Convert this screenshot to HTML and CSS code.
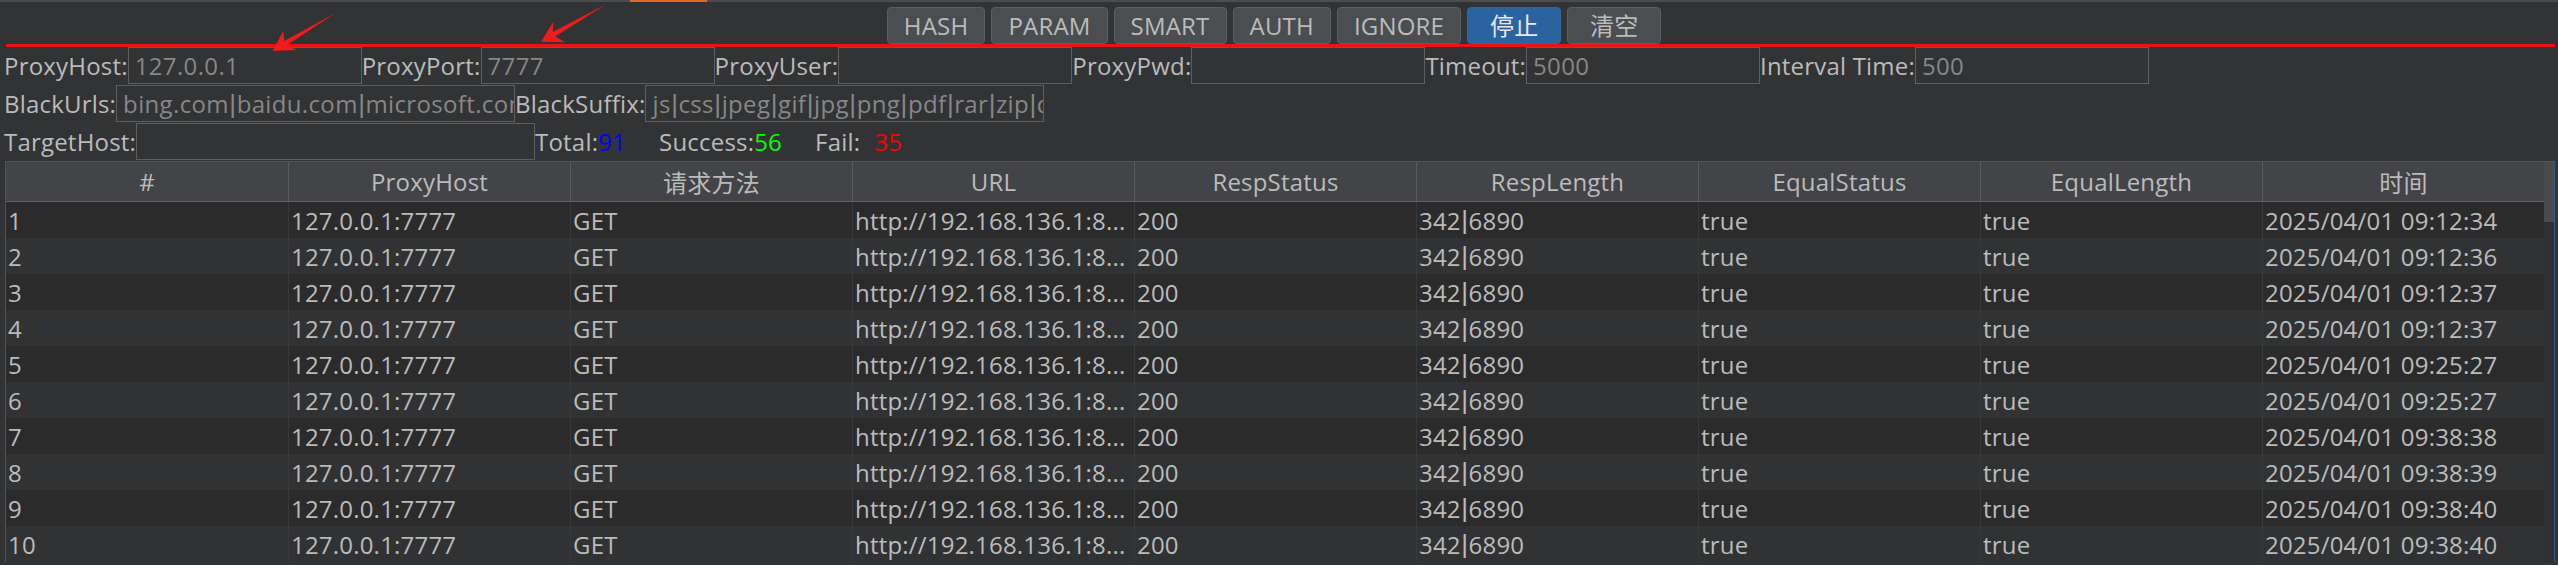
FILE: index.html
```html
<!DOCTYPE html>
<html lang="zh">
<head>
<meta charset="utf-8">
<title>Proxy Tester</title>
<link rel="stylesheet" href="styles.css">
</head>
<body>
<div class="app">
  <div class="tabline"><div class="accent"></div></div>
  <div class="toolbar">
    <div class="btn">HASH</div>
    <div class="btn">PARAM</div>
    <div class="btn">SMART</div>
    <div class="btn">AUTH</div>
    <div class="btn">IGNORE</div>
    <div class="btn btn-primary">停止</div>
    <div class="btn">清空</div>
  </div>
  <div class="redline"></div>

  <div class="form">
    <div class="frow">
      <span class="lbl">ProxyHost:</span><div class="field field-short">127.0.0.1</div>
      <span class="lbl">ProxyPort:</span><div class="field field-short">7777</div>
      <span class="lbl">ProxyUser:</span><div class="field field-short"></div>
      <span class="lbl">ProxyPwd:</span><div class="field field-short"></div>
      <span class="lbl">Timeout:</span><div class="field field-short">5000</div>
      <span class="lbl">Interval Time:</span><div class="field field-short">500</div>
    </div>
    <div class="frow">
      <span class="lbl">BlackUrls:</span><div class="field field-long">bing.com<span class="pipe">|</span>baidu.com<span class="pipe">|</span>microsoft.com<span class="pipe">|</span>google.com</div>
      <span class="lbl">BlackSuffix:</span><div class="field field-long">js<span class="pipe">|</span>css<span class="pipe">|</span>jpeg<span class="pipe">|</span>gif<span class="pipe">|</span>jpg<span class="pipe">|</span>png<span class="pipe">|</span>pdf<span class="pipe">|</span>rar<span class="pipe">|</span>zip<span class="pipe">|</span>doc<span class="pipe">|</span>docx</div>
    </div>
    <div class="frow">
      <span class="lbl">TargetHost:</span><div class="field field-long"></div>
      <span class="stat">Total:<span class="v-blue">91</span></span>
      <span class="stat stat-gap">Success:<span class="v-green">56</span></span>
      <span class="stat stat-gap">Fail:<span class="v-red">35</span></span>
    </div>
  </div>

  <div class="table">
    <div class="grid">
      <div class="thead">
        <div class="th">#</div>
        <div class="th">ProxyHost</div>
        <div class="th">请求方法</div>
        <div class="th">URL</div>
        <div class="th">RespStatus</div>
        <div class="th">RespLength</div>
        <div class="th">EqualStatus</div>
        <div class="th">EqualLength</div>
        <div class="th">时间</div>
      </div>
      <div class="tbody">
        <div class="tr"><div class="td">1</div><div class="td">127.0.0.1:7777</div><div class="td">GET</div><div class="td">http://192.168.136.1:8...</div><div class="td">200</div><div class="td">342<span class="pipe">|</span>6890</div><div class="td">true</div><div class="td">true</div><div class="td">2025/04/01 09:12:34</div></div>
        <div class="tr"><div class="td">2</div><div class="td">127.0.0.1:7777</div><div class="td">GET</div><div class="td">http://192.168.136.1:8...</div><div class="td">200</div><div class="td">342<span class="pipe">|</span>6890</div><div class="td">true</div><div class="td">true</div><div class="td">2025/04/01 09:12:36</div></div>
        <div class="tr"><div class="td">3</div><div class="td">127.0.0.1:7777</div><div class="td">GET</div><div class="td">http://192.168.136.1:8...</div><div class="td">200</div><div class="td">342<span class="pipe">|</span>6890</div><div class="td">true</div><div class="td">true</div><div class="td">2025/04/01 09:12:37</div></div>
        <div class="tr"><div class="td">4</div><div class="td">127.0.0.1:7777</div><div class="td">GET</div><div class="td">http://192.168.136.1:8...</div><div class="td">200</div><div class="td">342<span class="pipe">|</span>6890</div><div class="td">true</div><div class="td">true</div><div class="td">2025/04/01 09:12:37</div></div>
        <div class="tr"><div class="td">5</div><div class="td">127.0.0.1:7777</div><div class="td">GET</div><div class="td">http://192.168.136.1:8...</div><div class="td">200</div><div class="td">342<span class="pipe">|</span>6890</div><div class="td">true</div><div class="td">true</div><div class="td">2025/04/01 09:25:27</div></div>
        <div class="tr"><div class="td">6</div><div class="td">127.0.0.1:7777</div><div class="td">GET</div><div class="td">http://192.168.136.1:8...</div><div class="td">200</div><div class="td">342<span class="pipe">|</span>6890</div><div class="td">true</div><div class="td">true</div><div class="td">2025/04/01 09:25:27</div></div>
        <div class="tr"><div class="td">7</div><div class="td">127.0.0.1:7777</div><div class="td">GET</div><div class="td">http://192.168.136.1:8...</div><div class="td">200</div><div class="td">342<span class="pipe">|</span>6890</div><div class="td">true</div><div class="td">true</div><div class="td">2025/04/01 09:38:38</div></div>
        <div class="tr"><div class="td">8</div><div class="td">127.0.0.1:7777</div><div class="td">GET</div><div class="td">http://192.168.136.1:8...</div><div class="td">200</div><div class="td">342<span class="pipe">|</span>6890</div><div class="td">true</div><div class="td">true</div><div class="td">2025/04/01 09:38:39</div></div>
        <div class="tr"><div class="td">9</div><div class="td">127.0.0.1:7777</div><div class="td">GET</div><div class="td">http://192.168.136.1:8...</div><div class="td">200</div><div class="td">342<span class="pipe">|</span>6890</div><div class="td">true</div><div class="td">true</div><div class="td">2025/04/01 09:38:40</div></div>
        <div class="tr"><div class="td">10</div><div class="td">127.0.0.1:7777</div><div class="td">GET</div><div class="td">http://192.168.136.1:8...</div><div class="td">200</div><div class="td">342<span class="pipe">|</span>6890</div><div class="td">true</div><div class="td">true</div><div class="td">2025/04/01 09:38:40</div></div>
      </div>
    </div>
    <div class="vscroll"><div class="thumb"></div></div>
  </div>

  <svg class="annotations" width="700" height="60" viewBox="0 0 700 60">
    <polygon points="336,12.7 286.8,45.3 296.7,50 272.7,51 283.3,30.7 284.2,41.1" />
    <polygon points="606,4.3 555.3,36.4 565,42.3 541,41.7 553.3,21.7 552.8,32" />
  </svg>
</div>
</body>
</html>
```

FILE: styles.css
```css
* { box-sizing: border-box; }

html, body {
  margin: 0;
  padding: 0;
  background: #323335;
}

body {
  width: 2558px;
  height: 565px;
  overflow: hidden;
  font-family: "Open Sans", "Noto Sans CJK SC", sans-serif;
  font-size: 24px;
  letter-spacing: 0.2px;
  color: #bbbbbb;
}

.app {
  position: relative;
  width: 2558px;
  height: 565px;
  overflow: hidden;
}

.tabline {
  display: flex;
  height: 2px;
  background: #4a4c4f;
}

.tabline .accent {
  margin-left: 630px;
  width: 77px;
  background: #e0692a;
}

.toolbar {
  display: flex;
  justify-content: center;
  gap: 6px;
  height: 42px;
  padding: 5px 10px 0 0;
}

.btn {
  display: flex;
  align-items: center;
  justify-content: center;
  height: 37px;
  min-width: 94px;
  padding: 0 16px;
  border: 1px solid #5c5f62;
  border-radius: 4px;
  background: #4b4e51;
  color: #bbbbbb;
  line-height: 1;
  white-space: nowrap;
}

.btn-primary {
  background: #2a64a0;
  border-color: #2e68a3;
  color: #e8e8e8;
}

.redline {
  height: 3px;
  margin: 0 3px 0 6px;
  background: #e81414;
}

.form {
  display: flex;
  flex-direction: column;
  gap: 1px;
  padding-left: 4px;
}

.frow {
  display: flex;
  align-items: center;
  height: 37px;
}

.lbl {
  white-space: nowrap;
  line-height: 1;
}

.field {
  display: flex;
  align-items: center;
  height: 37px;
  padding: 0 6px;
  border: 1px solid #5e5e5e;
  color: #878787;
  overflow: hidden;
  white-space: nowrap;
  line-height: 1;
  letter-spacing: 0.35px;
}

.field-short { width: 234px; flex: none; }
.field-long { width: 399px; flex: none; }

.pipe {
  font-family: "Liberation Sans", sans-serif;
  font-size: 26px;
  letter-spacing: 0;
  margin: 0 0.5px;
}

.stat { white-space: nowrap; }
.stat-gap { margin-left: 33px; }
.v-blue { color: #0000ff; }
.v-green { color: #00ff00; }
.v-red { color: #ff0000; margin-left: 14px; }

.table {
  display: flex;
  margin: 1px 3px 0 5px;
  border: 1px solid #3b5876;
  border-bottom: none;
}

.grid {
  width: 2538px;
  flex: none;
}

.thead {
  display: grid;
  grid-template-columns: repeat(9, 282px);
  height: 40px;
  background: #434447;
  border-bottom: 1px solid #5f6063;
}

.th {
  display: flex;
  align-items: center;
  justify-content: center;
  border-left: 1px solid #595a5c;
  white-space: nowrap;
}

.th:first-child { border-left: none; }

.tr {
  display: grid;
  grid-template-columns: repeat(9, 282px);
  height: 36px;
  background: #313234;
}

.tbody > .tr:nth-child(odd) { background: #2b2b2c; }

.td {
  display: flex;
  align-items: center;
  padding-left: 2px;
  border-left: 1px solid #38393b;
  overflow: hidden;
  white-space: nowrap;
}

.td:first-child { border-left: none; }

.vscroll {
  width: 10px;
  flex: none;
  background: #2f3032;
}

.thumb {
  height: 60px;
  background: #4a4b4d;
}

.annotations {
  position: absolute;
  top: 0;
  left: 0;
  pointer-events: none;
}

.annotations polygon { fill: #f01b1b; }
```
